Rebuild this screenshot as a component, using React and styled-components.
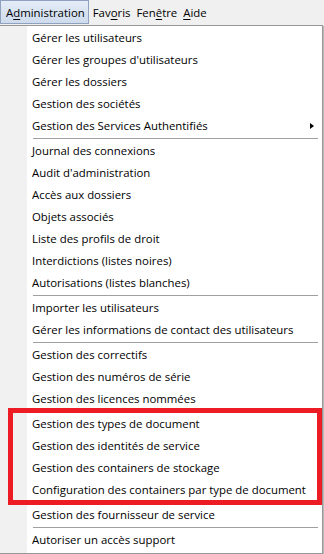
import React from "react";
import styled, { createGlobalStyle } from "styled-components";

const GlobalStyle = createGlobalStyle`
  html, body {
    margin: 0;
    padding: 0;
    background: #f0f0f0;
    overflow: hidden;
  }
  body {
    font-family: "Open Sans", "Noto Sans", sans-serif;
    font-size: 11.4px;
    color: #000;
  }
`;

const menuBar = [
  { label: "Administration", key: 1, open: true },
  { label: "Favoris", key: 3 },
  { label: "Fenêtre", key: 3 },
  { label: "Aide", key: 0 },
];

const sections = [
  [
    { label: "Gérer les utilisateurs" },
    { label: "Gérer les groupes d'utilisateurs" },
    { label: "Gérer les dossiers" },
    { label: "Gestion des sociétés" },
    { label: "Gestion des Services Authentifiés", sub: true },
  ],
  [
    { label: "Journal des connexions" },
    { label: "Audit d'administration" },
    { label: "Accès aux dossiers" },
    { label: "Objets associés" },
    { label: "Liste des profils de droit" },
    { label: "Interdictions (listes noires)" },
    { label: "Autorisations (listes blanches)" },
  ],
  [
    { label: "Importer les utilisateurs" },
    { label: "Gérer les informations de contact des utilisateurs" },
  ],
  [
    { label: "Gestion des correctifs" },
    { label: "Gestion des numéros de série" },
    { label: "Gestion des licences nommées" },
    {
      group: [
        { label: "Gestion des types de document" },
        { label: "Gestion des identités de service" },
        { label: "Gestion des containers de stockage" },
        { label: "Configuration des containers par type de document" },
      ],
    },
    { label: "Gestion des fournisseur de service" },
  ],
  [{ label: "Autoriser un accès support" }],
];

export default function App() {
  return (
    <Screen>
      <GlobalStyle />
      <Bar>
        {menuBar.map((m) => (
          <BarItem key={m.label} open={m.open}>
            {m.label.slice(0, m.key)}
            <u>{m.label[m.key]}</u>
            {m.label.slice(m.key + 1)}
          </BarItem>
        ))}
      </Bar>
      <Dropdown>
        {sections.map((section, i) => (
          <React.Fragment key={i}>
            {i > 0 && <Separator />}
            {section.map((item, j) =>
              item.group ? (
                <Highlight key={j}>
                  {item.group.map((g) => (
                    <Item key={g.label}>{g.label}</Item>
                  ))}
                </Highlight>
              ) : (
                <Item key={item.label}>
                  {item.label}
                  {item.sub && <Arrow />}
                </Item>
              )
            )}
          </React.Fragment>
        ))}
      </Dropdown>
    </Screen>
  );
}

const Screen = styled.div`
  width: 324px;
  height: 554px;
  background: #f0f0f0;
  display: flex;
  flex-direction: column;
`;

const Bar = styled.div`
  height: 25px;
  display: flex;
  align-items: flex-start;
  background: #f0f0f0;
`;

const BarItem = styled.div`
  box-sizing: border-box;
  height: 24px;
  line-height: 20px;
  padding: 2px ${(p) => (p.open ? "3px" : "2px")} 0 ${(p) => (p.open ? "5px" : "2px")};
  margin-right: ${(p) => (p.open ? "1px" : "0")};
  border: 1px solid ${(p) => (p.open ? "#8ea2bf" : "transparent")};
  background: ${(p) =>
    p.open ? "linear-gradient(#e4ecf7, #cedbec)" : "transparent"};
  u {
    text-decoration-thickness: 1px;
    text-underline-offset: 2px;
  }
`;

const Dropdown = styled.div`
  box-sizing: border-box;
  width: 324px;
  margin-left: -1px;
  flex: 1;
  padding: 1px 0 0;
  border: 1px solid #979797;
  box-shadow: 1px 1px 0 #b8b8b8;
  background: linear-gradient(to right, #f1f1f1 27px, #fff 27px);
  display: flex;
  flex-direction: column;
`;

const Item = styled.div`
  position: relative;
  height: 22px;
  line-height: 22px;
  padding-left: 32px;
  white-space: nowrap;
`;

const Arrow = styled.span`
  position: absolute;
  right: 8px;
  top: 8px;
  width: 0;
  height: 0;
  border-top: 3.5px solid transparent;
  border-bottom: 3.5px solid transparent;
  border-left: 4px solid #000;
`;

const Separator = styled.div`
  height: 3px;
  margin-left: 33px;
  margin-right: 4px;
  display: flex;
  align-items: center;
  &::before {
    content: "";
    flex: 1;
    height: 1px;
    background: #a0a0a0;
  }
`;

const Highlight = styled.div`
  position: relative;
  padding: 3px 0;
  &::after {
    content: "";
    position: absolute;
    top: -2px;
    bottom: -1px;
    left: 8px;
    right: 0;
    border: 5px solid #ed1c24;
    pointer-events: none;
  }
`;
